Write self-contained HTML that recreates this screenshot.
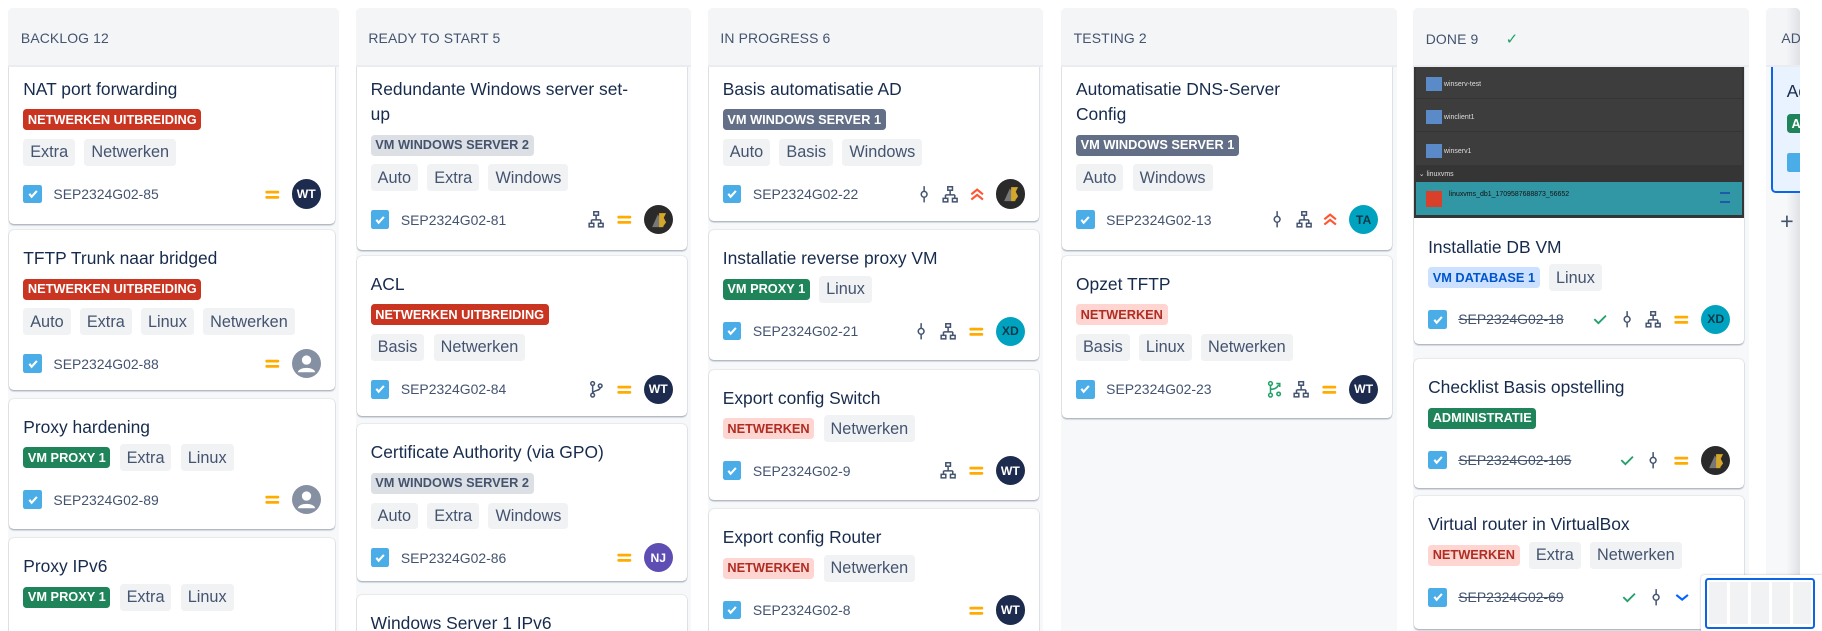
<!DOCTYPE html>
<html><head><meta charset="utf-8"><style>
*{box-sizing:border-box;margin:0;padding:0}
html,body{width:1822px;height:631px;overflow:hidden;background:#fff}
#w{zoom:1.16199;width:1568px;height:543px;position:relative;overflow:hidden;font-family:"Liberation Sans",sans-serif;color:#172b4d}
.col{position:absolute;top:7px;height:536px;background:#f7f8f9;border-radius:4px 4px 0 0;overflow:hidden}
.hd{position:absolute;left:0;right:0;top:0;height:51px;background:#f4f5f7;border-bottom:2px solid #ebecf0;z-index:5;font-size:12px;color:#44546f;padding:19px 0 0 11px;letter-spacing:.1px}
.card{position:absolute;left:1px;right:4px;background:#fff;border-radius:4px;box-shadow:0 1px 1px rgba(9,30,66,.25),0 0 1px rgba(9,30,66,.31);padding:14px 12px 5px 12px}
.t{font-size:15px;line-height:22px;color:#172b4d;margin-bottom:1px}
.row{height:28px;display:flex;align-items:center;gap:8px}
.lz{font-size:11px;font-weight:bold;padding:2px 4px;border-radius:3px;line-height:14px;white-space:nowrap}
.r{background:#ca3521;color:#fff}.g{background:#1f845a;color:#fff}.d{background:#626f86;color:#fff}.l{background:#dcdfe4;color:#44546f}.p{background:#ffd5d2;color:#ae2e24}.b{background:#cce0ff;color:#0055cc}
.tag{font-size:14px;background:#f1f2f4;color:#44546f;padding:2px 6px;border-radius:3px;line-height:19px}
.ft{height:34px;display:flex;align-items:center;margin-top:5px}
.cb{width:16px;height:16px;background:#4bade8;border-radius:2px;display:flex;align-items:center;justify-content:center;margin-right:10px}
.k{font-size:12px;color:#44546f}
.s{text-decoration:line-through}
.ri{margin-left:auto;display:flex;align-items:center;gap:9px}
.av{width:25px;height:25px;border-radius:50%;color:#fff;font-size:10.5px;font-weight:bold;display:flex;align-items:center;justify-content:center}
.wt{background:#1d2b4f}.xd{background:#00a3bf;color:#0c3a4a}.ta{background:#00a3bf;color:#0c3a4a}.nj{background:#5e4db2}.gr{background:#8590a2}
.a3{background:#2a2a2a}
</style></head><body><div id="w">

<!-- BACKLOG -->
<div class="col" style="left:7px;width:285px">
<div class="hd">BACKLOG 12</div>
<div class="card" style="top:45px;height:141px"><div class="t">NAT port forwarding</div>
<div class="row"><span class="lz r">NETWERKEN UITBREIDING</span></div>
<div class="row"><span class="tag">Extra</span><span class="tag">Netwerken</span></div>
<div class="ft"><span class="cb"><svg width="10" height="10"><path d="M2 5l2 2.5L8.5 2.5" stroke="#fff" stroke-width="1.8" fill="none"/></svg></span><span class="k">SEP2324G02-85</span><span class="ri"><svg width="16" height="16"><rect x="2" y="5" width="12" height="2.3" rx="1" fill="#ffab00"/><rect x="2" y="9.5" width="12" height="2.3" rx="1" fill="#ffab00"/></svg><span class="av wt">WT</span></span></div></div>
<div class="card" style="top:191px;height:138px"><div class="t">TFTP Trunk naar bridged</div>
<div class="row"><span class="lz r">NETWERKEN UITBREIDING</span></div>
<div class="row"><span class="tag">Auto</span><span class="tag">Extra</span><span class="tag">Linux</span><span class="tag">Netwerken</span></div>
<div class="ft"><span class="cb"><svg width="10" height="10"><path d="M2 5l2 2.5L8.5 2.5" stroke="#fff" stroke-width="1.8" fill="none"/></svg></span><span class="k">SEP2324G02-88</span><span class="ri"><svg width="16" height="16"><rect x="2" y="5" width="12" height="2.3" rx="1" fill="#ffab00"/><rect x="2" y="9.5" width="12" height="2.3" rx="1" fill="#ffab00"/></svg><span class="av gr"><svg width="25" height="25"><circle cx="12.5" cy="9.5" r="4" fill="#fff"/><path d="M5 20c1-5 14-5 15 0z" fill="#fff"/></svg></span></span></div></div>
<div class="card" style="top:336px;height:112px"><div class="t">Proxy hardening</div>
<div class="row"><span class="lz g">VM PROXY 1</span><span class="tag">Extra</span><span class="tag">Linux</span></div>
<div class="ft"><span class="cb"><svg width="10" height="10"><path d="M2 5l2 2.5L8.5 2.5" stroke="#fff" stroke-width="1.8" fill="none"/></svg></span><span class="k">SEP2324G02-89</span><span class="ri"><svg width="16" height="16"><rect x="2" y="5" width="12" height="2.3" rx="1" fill="#ffab00"/><rect x="2" y="9.5" width="12" height="2.3" rx="1" fill="#ffab00"/></svg><span class="av gr"><svg width="25" height="25"><circle cx="12.5" cy="9.5" r="4" fill="#fff"/><path d="M5 20c1-5 14-5 15 0z" fill="#fff"/></svg></span></span></div></div>
<div class="card" style="top:456px;height:120px"><div class="t">Proxy IPv6</div>
<div class="row"><span class="lz g">VM PROXY 1</span><span class="tag">Extra</span><span class="tag">Linux</span></div></div>
</div>

<!-- READY -->
<div class="col" style="left:306px;width:289px">
<div class="hd">READY TO START 5</div>
<div class="card" style="top:45px;height:163px"><div class="t">Redundante Windows server set-<br>up</div>
<div class="row"><span class="lz l">VM WINDOWS SERVER 2</span></div>
<div class="row"><span class="tag">Auto</span><span class="tag">Extra</span><span class="tag">Windows</span></div>
<div class="ft"><span class="cb"><svg width="10" height="10"><path d="M2 5l2 2.5L8.5 2.5" stroke="#fff" stroke-width="1.8" fill="none"/></svg></span><span class="k">SEP2324G02-81</span><span class="ri"><svg width="14" height="16"><g stroke="#44546f" stroke-width="1.3" fill="none"><rect x="5" y="1.5" width="4" height="3"/><path d="M7 4.5v4M3 8.5h8M3 8.5v3M11 8.5v3"/><rect x="1" y="11.5" width="4" height="3"/><rect x="9" y="11.5" width="4" height="3"/></g></svg><svg width="16" height="16"><rect x="2" y="5" width="12" height="2.3" rx="1" fill="#ffab00"/><rect x="2" y="9.5" width="12" height="2.3" rx="1" fill="#ffab00"/></svg><span class="av a3"><svg width="25" height="25"><path d="M7 19l5-11 5 11z" fill="#777"/><path d="M13 7h6l-2 4 2 4-3 4h-3z" fill="#d4a62a"/></svg></span></span></div></div>
<div class="card" style="top:213px;height:138px"><div class="t">ACL</div>
<div class="row"><span class="lz r">NETWERKEN UITBREIDING</span></div>
<div class="row"><span class="tag">Basis</span><span class="tag">Netwerken</span></div>
<div class="ft"><span class="cb"><svg width="10" height="10"><path d="M2 5l2 2.5L8.5 2.5" stroke="#fff" stroke-width="1.8" fill="none"/></svg></span><span class="k">SEP2324G02-84</span><span class="ri"><svg width="14" height="16"><g stroke="#44546f" stroke-width="1.3" fill="none"><circle cx="4" cy="3" r="1.6"/><circle cx="4" cy="13" r="1.6"/><circle cx="10.5" cy="5" r="1.6"/><path d="M4 4.6v6.8M10.5 6.6c0 3-6.5 2-6.5 5"/></g></svg><svg width="16" height="16"><rect x="2" y="5" width="12" height="2.3" rx="1" fill="#ffab00"/><rect x="2" y="9.5" width="12" height="2.3" rx="1" fill="#ffab00"/></svg><span class="av wt">WT</span></span></div></div>
<div class="card" style="top:358px;height:135px"><div class="t">Certificate Authority (via GPO)</div>
<div class="row"><span class="lz l">VM WINDOWS SERVER 2</span></div>
<div class="row"><span class="tag">Auto</span><span class="tag">Extra</span><span class="tag">Windows</span></div>
<div class="ft"><span class="cb"><svg width="10" height="10"><path d="M2 5l2 2.5L8.5 2.5" stroke="#fff" stroke-width="1.8" fill="none"/></svg></span><span class="k">SEP2324G02-86</span><span class="ri"><svg width="16" height="16"><rect x="2" y="5" width="12" height="2.3" rx="1" fill="#ffab00"/><rect x="2" y="9.5" width="12" height="2.3" rx="1" fill="#ffab00"/></svg><span class="av nj">NJ</span></span></div></div>
<div class="card" style="top:505px;height:80px"><div class="t">Windows Server 1 IPv6</div></div>
</div>

<!-- IN PROGRESS -->
<div class="col" style="left:609px;width:289px">
<div class="hd">IN PROGRESS 6</div>
<div class="card" style="top:45px;height:138px"><div class="t">Basis automatisatie AD</div>
<div class="row"><span class="lz d">VM WINDOWS SERVER 1</span></div>
<div class="row"><span class="tag">Auto</span><span class="tag">Basis</span><span class="tag">Windows</span></div>
<div class="ft"><span class="cb"><svg width="10" height="10"><path d="M2 5l2 2.5L8.5 2.5" stroke="#fff" stroke-width="1.8" fill="none"/></svg></span><span class="k">SEP2324G02-22</span><span class="ri"><svg width="14" height="16"><g stroke="#44546f" stroke-width="1.3" fill="none"><path d="M7 1v4.5M7 10.5V15"/><circle cx="7" cy="8" r="2.5"/></g></svg><svg width="14" height="16"><g stroke="#44546f" stroke-width="1.3" fill="none"><rect x="5" y="1.5" width="4" height="3"/><path d="M7 4.5v4M3 8.5h8M3 8.5v3M11 8.5v3"/><rect x="1" y="11.5" width="4" height="3"/><rect x="9" y="11.5" width="4" height="3"/></g></svg><svg width="14" height="16"><path d="M2 8l5-4 5 4M2 12.5l5-4 5 4" stroke="#ff5630" stroke-width="1.8" fill="none"/></svg><span class="av a3"><svg width="25" height="25"><path d="M7 19l5-11 5 11z" fill="#777"/><path d="M13 7h6l-2 4 2 4-3 4h-3z" fill="#d4a62a"/></svg></span></span></div></div>
<div class="card" style="top:191px;height:112px"><div class="t">Installatie reverse proxy VM</div>
<div class="row"><span class="lz g">VM PROXY 1</span><span class="tag">Linux</span></div>
<div class="ft"><span class="cb"><svg width="10" height="10"><path d="M2 5l2 2.5L8.5 2.5" stroke="#fff" stroke-width="1.8" fill="none"/></svg></span><span class="k">SEP2324G02-21</span><span class="ri"><svg width="14" height="16"><g stroke="#44546f" stroke-width="1.3" fill="none"><path d="M7 1v4.5M7 10.5V15"/><circle cx="7" cy="8" r="2.5"/></g></svg><svg width="14" height="16"><g stroke="#44546f" stroke-width="1.3" fill="none"><rect x="5" y="1.5" width="4" height="3"/><path d="M7 4.5v4M3 8.5h8M3 8.5v3M11 8.5v3"/><rect x="1" y="11.5" width="4" height="3"/><rect x="9" y="11.5" width="4" height="3"/></g></svg><svg width="16" height="16"><rect x="2" y="5" width="12" height="2.3" rx="1" fill="#ffab00"/><rect x="2" y="9.5" width="12" height="2.3" rx="1" fill="#ffab00"/></svg><span class="av xd">XD</span></span></div></div>
<div class="card" style="top:311px;height:112px"><div class="t">Export config Switch</div>
<div class="row"><span class="lz p">NETWERKEN</span><span class="tag">Netwerken</span></div>
<div class="ft"><span class="cb"><svg width="10" height="10"><path d="M2 5l2 2.5L8.5 2.5" stroke="#fff" stroke-width="1.8" fill="none"/></svg></span><span class="k">SEP2324G02-9</span><span class="ri"><svg width="14" height="16"><g stroke="#44546f" stroke-width="1.3" fill="none"><rect x="5" y="1.5" width="4" height="3"/><path d="M7 4.5v4M3 8.5h8M3 8.5v3M11 8.5v3"/><rect x="1" y="11.5" width="4" height="3"/><rect x="9" y="11.5" width="4" height="3"/></g></svg><svg width="16" height="16"><rect x="2" y="5" width="12" height="2.3" rx="1" fill="#ffab00"/><rect x="2" y="9.5" width="12" height="2.3" rx="1" fill="#ffab00"/></svg><span class="av wt">WT</span></span></div></div>
<div class="card" style="top:431px;height:130px"><div class="t">Export config Router</div>
<div class="row"><span class="lz p">NETWERKEN</span><span class="tag">Netwerken</span></div>
<div class="ft"><span class="cb"><svg width="10" height="10"><path d="M2 5l2 2.5L8.5 2.5" stroke="#fff" stroke-width="1.8" fill="none"/></svg></span><span class="k">SEP2324G02-8</span><span class="ri"><svg width="16" height="16"><rect x="2" y="5" width="12" height="2.3" rx="1" fill="#ffab00"/><rect x="2" y="9.5" width="12" height="2.3" rx="1" fill="#ffab00"/></svg><span class="av wt">WT</span></span></div></div>
</div>

<!-- TESTING -->
<div class="col" style="left:913px;width:289px">
<div class="hd">TESTING 2</div>
<div class="card" style="top:45px;height:163px"><div class="t">Automatisatie DNS-Server<br>Config</div>
<div class="row"><span class="lz d">VM WINDOWS SERVER 1</span></div>
<div class="row"><span class="tag">Auto</span><span class="tag">Windows</span></div>
<div class="ft"><span class="cb"><svg width="10" height="10"><path d="M2 5l2 2.5L8.5 2.5" stroke="#fff" stroke-width="1.8" fill="none"/></svg></span><span class="k">SEP2324G02-13</span><span class="ri"><svg width="14" height="16"><g stroke="#44546f" stroke-width="1.3" fill="none"><path d="M7 1v4.5M7 10.5V15"/><circle cx="7" cy="8" r="2.5"/></g></svg><svg width="14" height="16"><g stroke="#44546f" stroke-width="1.3" fill="none"><rect x="5" y="1.5" width="4" height="3"/><path d="M7 4.5v4M3 8.5h8M3 8.5v3M11 8.5v3"/><rect x="1" y="11.5" width="4" height="3"/><rect x="9" y="11.5" width="4" height="3"/></g></svg><svg width="14" height="16"><path d="M2 8l5-4 5 4M2 12.5l5-4 5 4" stroke="#ff5630" stroke-width="1.8" fill="none"/></svg><span class="av ta">TA</span></span></div></div>
<div class="card" style="top:213px;height:140px"><div class="t">Opzet TFTP</div>
<div class="row"><span class="lz p">NETWERKEN</span></div>
<div class="row"><span class="tag">Basis</span><span class="tag">Linux</span><span class="tag">Netwerken</span></div>
<div class="ft"><span class="cb"><svg width="10" height="10"><path d="M2 5l2 2.5L8.5 2.5" stroke="#fff" stroke-width="1.8" fill="none"/></svg></span><span class="k">SEP2324G02-23</span><span class="ri"><svg width="14" height="16"><g stroke="#22a06b" stroke-width="1.3" fill="none"><circle cx="3" cy="3" r="1.6"/><circle cx="3" cy="13" r="1.6"/><path d="M3 4.6v6.8M3 8c3 0 6-1 7-4M8 3h3v3"/><circle cx="10" cy="12" r="1.5"/></g></svg><svg width="14" height="16"><g stroke="#44546f" stroke-width="1.3" fill="none"><rect x="5" y="1.5" width="4" height="3"/><path d="M7 4.5v4M3 8.5h8M3 8.5v3M11 8.5v3"/><rect x="1" y="11.5" width="4" height="3"/><rect x="9" y="11.5" width="4" height="3"/></g></svg><svg width="16" height="16"><rect x="2" y="5" width="12" height="2.3" rx="1" fill="#ffab00"/><rect x="2" y="9.5" width="12" height="2.3" rx="1" fill="#ffab00"/></svg><span class="av wt">WT</span></span></div></div>
</div>

<!-- DONE -->
<div class="col" style="left:1216px;width:289px">
<div class="hd">DONE 9 <span style="color:#22a06b;margin-left:20px;font-size:13px">✓</span></div>
<div class="card" style="top:45px;height:244px;padding-top:0;overflow:hidden">
<div style="margin:0 -12px 0 -12px;height:136px;background:#353535;position:relative;font-size:6px;color:#ddd">
<div style="position:absolute;left:2px;top:4px;right:2px;height:28px;background:#3d3d3d"></div>
<div style="position:absolute;left:2px;top:33px;right:2px;height:28px;background:#3d3d3d"></div>
<div style="position:absolute;left:2px;top:62px;right:2px;height:28px;background:#3d3d3d"></div>
<div style="position:absolute;left:10px;top:14px"><span style="display:inline-block;width:14px;height:12px;background:#5a8ac8;vertical-align:middle"></span> winserv-test</div>
<div style="position:absolute;left:10px;top:43px"><span style="display:inline-block;width:14px;height:12px;background:#5a8ac8;vertical-align:middle"></span> winclient1</div>
<div style="position:absolute;left:10px;top:72px"><span style="display:inline-block;width:14px;height:12px;background:#5a8ac8;vertical-align:middle"></span> winserv1</div>
<div style="position:absolute;left:4px;top:94px">⌄ linuxvms</div>
<div style="position:absolute;left:2px;top:105px;right:2px;height:28px;background:#3297a4"><span style="position:absolute;left:8px;top:7px;width:14px;height:14px;background:#d8402a"></span><span style="position:absolute;left:28px;top:7px;color:#111">linuxvms_db1_1709587688873_56652</span><span style="position:absolute;right:10px;top:8px;width:9px;height:10px;border-top:2px solid #1e5aa8;border-bottom:2px solid #1e5aa8"></span></div>
</div>
<div style="padding-top:14px"></div>
<div class="t">Installatie DB VM</div>
<div class="row"><span class="lz b">VM DATABASE 1</span><span class="tag">Linux</span></div>
<div class="ft"><span class="cb"><svg width="10" height="10"><path d="M2 5l2 2.5L8.5 2.5" stroke="#fff" stroke-width="1.8" fill="none"/></svg></span><span class="k s">SEP2324G02-18</span><span class="ri"><svg width="14" height="14"><path d="M2 7l3.5 3.5L12 4" stroke="#22a06b" stroke-width="1.6" fill="none"/></svg><svg width="14" height="16"><g stroke="#44546f" stroke-width="1.3" fill="none"><path d="M7 1v4.5M7 10.5V15"/><circle cx="7" cy="8" r="2.5"/></g></svg><svg width="14" height="16"><g stroke="#44546f" stroke-width="1.3" fill="none"><rect x="5" y="1.5" width="4" height="3"/><path d="M7 4.5v4M3 8.5h8M3 8.5v3M11 8.5v3"/><rect x="1" y="11.5" width="4" height="3"/><rect x="9" y="11.5" width="4" height="3"/></g></svg><svg width="16" height="16"><rect x="2" y="5" width="12" height="2.3" rx="1" fill="#ffab00"/><rect x="2" y="9.5" width="12" height="2.3" rx="1" fill="#ffab00"/></svg><span class="av xd">XD</span></span></div></div>
<div class="card" style="top:302px;height:111px"><div class="t">Checklist Basis opstelling</div>
<div class="row"><span class="lz g">ADMINISTRATIE</span></div>
<div class="ft"><span class="cb"><svg width="10" height="10"><path d="M2 5l2 2.5L8.5 2.5" stroke="#fff" stroke-width="1.8" fill="none"/></svg></span><span class="k s">SEP2324G02-105</span><span class="ri"><svg width="14" height="14"><path d="M2 7l3.5 3.5L12 4" stroke="#22a06b" stroke-width="1.6" fill="none"/></svg><svg width="14" height="16"><g stroke="#44546f" stroke-width="1.3" fill="none"><path d="M7 1v4.5M7 10.5V15"/><circle cx="7" cy="8" r="2.5"/></g></svg><svg width="16" height="16"><rect x="2" y="5" width="12" height="2.3" rx="1" fill="#ffab00"/><rect x="2" y="9.5" width="12" height="2.3" rx="1" fill="#ffab00"/></svg><span class="av a3"><svg width="25" height="25"><path d="M7 19l5-11 5 11z" fill="#777"/><path d="M13 7h6l-2 4 2 4-3 4h-3z" fill="#d4a62a"/></svg></span></span></div></div>
<div class="card" style="top:420px;height:114px"><div class="t">Virtual router in VirtualBox</div>
<div class="row"><span class="lz p">NETWERKEN</span><span class="tag">Extra</span><span class="tag">Netwerken</span></div>
<div class="ft"><span class="cb"><svg width="10" height="10"><path d="M2 5l2 2.5L8.5 2.5" stroke="#fff" stroke-width="1.8" fill="none"/></svg></span><span class="k s">SEP2324G02-69</span><span class="ri"><svg width="14" height="14"><path d="M2 7l3.5 3.5L12 4" stroke="#22a06b" stroke-width="1.6" fill="none"/></svg><svg width="14" height="16"><g stroke="#44546f" stroke-width="1.3" fill="none"><path d="M7 1v4.5M7 10.5V15"/><circle cx="7" cy="8" r="2.5"/></g></svg><svg width="14" height="16"><path d="M2 6l5 4 5-4" stroke="#0065ff" stroke-width="1.8" fill="none"/></svg><span class="av nj">NJ</span></span></div></div>
</div>

<!-- NEXT partial -->
<div class="col" style="left:1520px;width:29px;background:linear-gradient(90deg,#f7f8f9 60%,#dfe1e6)">
<div class="hd" style="background:linear-gradient(90deg,#f4f5f7 60%,#dfe1e6);padding-left:13px">ADMINISTRATIE</div>
<div style="position:absolute;left:4px;top:45px;width:40px;height:114px;border:2px solid #0c66e4;border-radius:4px;background:#e9f2ff">
<div style="position:absolute;left:12px;top:16px;font-size:15px">Admin</div>
<div style="position:absolute;left:12px;top:44px;width:30px;height:17px;background:#1f845a;border-radius:3px;color:#fff;font-size:11px;font-weight:bold;padding:2px 4px">A</div>
<div style="position:absolute;left:12px;top:78px;width:16px;height:16px;background:#4bade8;border-radius:2px"></div>
</div>
<div style="position:absolute;left:12px;top:172px;font-size:20px;color:#44546f">+</div>
</div>

<!-- minimap -->
<div style="position:absolute;left:1464px;top:495px;width:110px;height:50px;background:#fff;box-shadow:0 0 2px rgba(9,30,66,.3);border-radius:3px"></div>
<div style="position:absolute;left:1467px;top:497px;width:95px;height:44px;border:2px solid #0c66e4;border-radius:3px;display:flex;gap:3px;padding:2px">
<span style="flex:1;background:#f1f2f4"></span><span style="flex:1;background:#f1f2f4"></span><span style="flex:1;background:#f1f2f4"></span><span style="flex:1;background:#f1f2f4"></span><span style="flex:1;background:#f1f2f4"></span></div>

</div></body></html>
